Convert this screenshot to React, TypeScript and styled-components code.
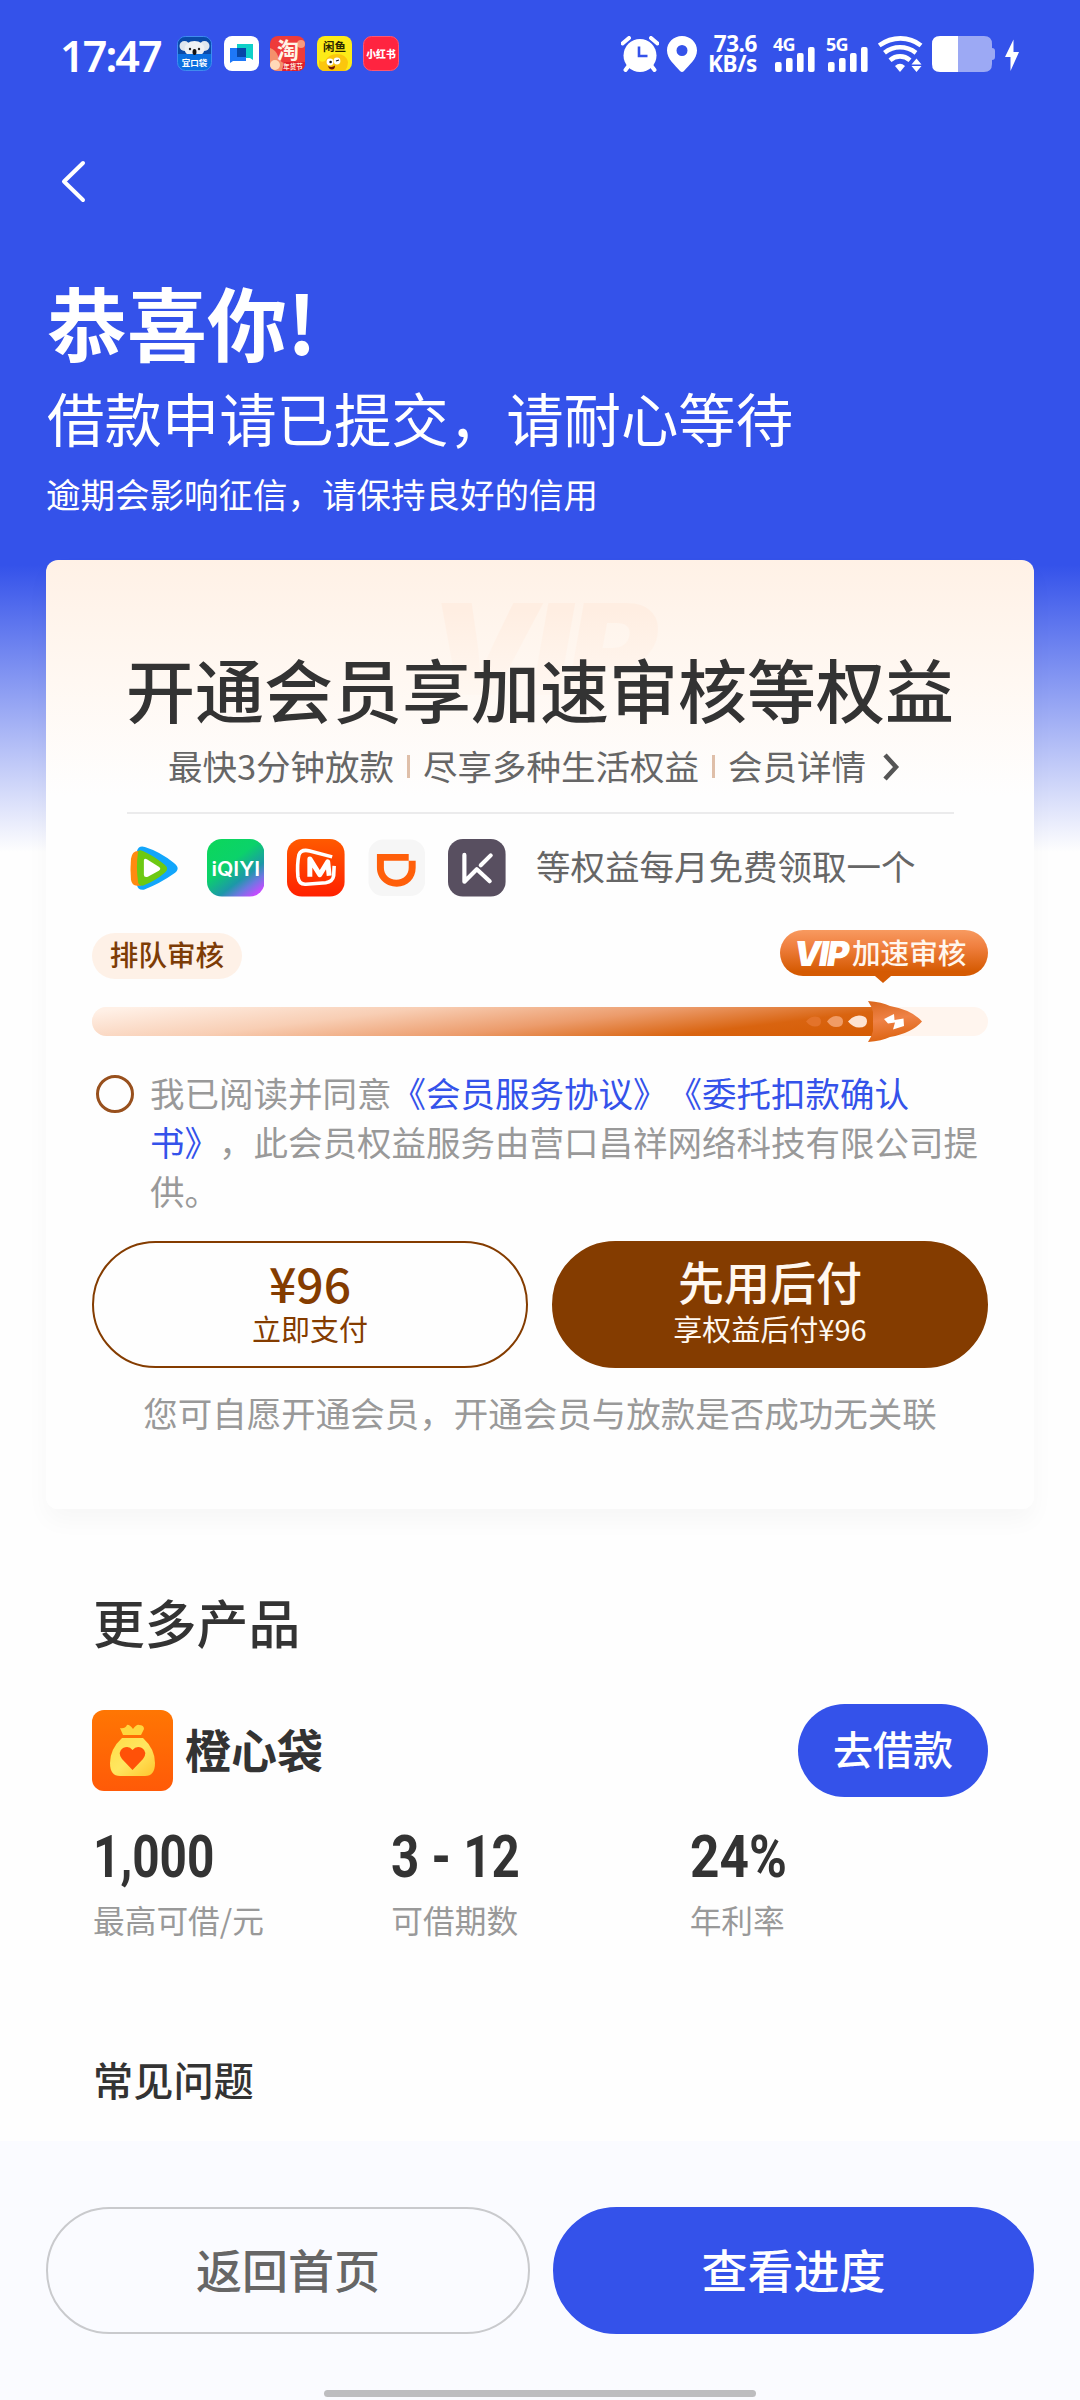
import React from "react";
import styled, { createGlobalStyle, css } from "styled-components";

const BLUE = "#3452ea";
const BROWN = "#843c00";

const Global = createGlobalStyle`
  * { box-sizing: border-box; }
  body {
    margin: 0;
    background: #fefefe;
    font-family: "Noto Sans CJK SC", sans-serif;
    text-spacing-trim: space-all;
  }
`;

const Page = styled.div`
  width: 1080px;
  height: 2400px;
  display: flex;
  flex-direction: column;
  overflow: hidden;
  background: linear-gradient(180deg, ${BLUE} 0, ${BLUE} 565px, #fefefe 852px);
`;

/* ---------- status bar ---------- */

const StatusBar = styled.header`
  height: 108px;
  padding: 36px 61px 0 60px;
  display: flex;
  align-items: flex-start;
  color: #fff;
`;

const Clock = styled.div`
  width: 117px;
  height: 36px;
  font: 600 43px/40px "Noto Sans", sans-serif;
  letter-spacing: -1.9px;
  white-space: nowrap;
`;

const Notifications = styled.div`
  display: flex;
  gap: 11.5px;
  margin-right: auto;
`;

const StatusIcons = styled.div`
  display: flex;
  align-items: flex-start;
`;

const Slot = styled.div<{ $w: number; $gap?: number }>`
  width: ${(p) => p.$w}px;
  margin-right: ${(p) => p.$gap ?? 0}px;
  flex: none;
  svg { display: block; }
`;

const Speed = styled.div`
  display: flex;
  flex-direction: column;
  align-items: flex-end;
  font: 700 22.5px/20px "Noto Sans", sans-serif;
  letter-spacing: -0.4px;
  white-space: nowrap;
  margin-top: -2px;
`;

const Network = styled.span`
  display: block;
  height: 14px;
  font: 700 18px/16px "Noto Sans", sans-serif;
  letter-spacing: -0.8px;
`;

const BarsDrawing = styled.svg`
  margin: -3px 0 0 2px;
`;

/* ---------- heading ---------- */

const NavBar = styled.nav`
  height: 164px;
  padding: 52px 0 0 61px;
`;

const Heading = styled.section`
  padding: 0 47px;
  color: #fff;
  white-space: nowrap;
`;

const Congrats = styled.h1`
  margin: 0;
  font-size: 80px;
  line-height: 97px;
  font-weight: 700;
`;

const Submitted = styled.p`
  margin: 12px 0 0;
  font-size: 57.4px;
  line-height: 72px;
`;

const Reminder = styled.p`
  margin: 18px 0 0 -1px;
  font-size: 34.5px;
  line-height: 44px;
`;

/* ---------- membership card ---------- */

const Card = styled.section`
  margin: 45px 46px 0;
  height: 949px;
  flex: none;
  padding: 88px 46px 0;
  border-radius: 12px;
  background: linear-gradient(180deg, #fff1e6 0, #fff8f2 120px, #fefefe 235px);
  box-shadow: 0 12px 24px rgba(0, 0, 0, 0.03);
  display: flex;
  flex-direction: column;
`;

const CardTitle = styled.h2`
  position: relative;
  margin: 0;
  text-align: center;
  font-size: 69px;
  line-height: 80px;
  font-weight: 500;
  color: #333;
  white-space: nowrap;
`;

const Watermark = styled.span`
  position: absolute;
  left: 336px;
  top: -62px;
  font: italic 900 126px/126px Inter, sans-serif;
  letter-spacing: -4px;
  padding-right: 20px;
  color: transparent;
  background: linear-gradient(180deg, #ffeee2 20%, #fff8f2 90%);
  background-clip: text;
  -webkit-background-clip: text;
  transform: scaleX(1.08);
  transform-origin: left;
`;

const TitleText = styled.span`
  position: relative;
`;

const Perks = styled.div`
  margin-top: 15px;
  height: 44px;
  padding-right: 12px;
  display: flex;
  justify-content: center;
  align-items: center;
  font-size: 34.5px;
  line-height: 44px;
  color: #666;
  white-space: nowrap;
`;

const PerkRule = styled.i`
  width: 3px;
  height: 23px;
  margin: 2px 13px 0;
  background: #dfbfa9;
`;

const Rule = styled.hr`
  width: 827px;
  height: 2px;
  margin: 25px auto 0;
  border: 0;
  background: #ebebec;
`;

const Benefits = styled.div`
  margin: 25px 0 0 34px;
  height: 58px;
  display: flex;
  align-items: center;
  gap: 23px;
  svg { display: block; flex: none; }
`;

const BenefitText = styled.span`
  margin: -6px 0 0 7px;
  font-size: 34.5px;
  line-height: 44px;
  color: #666;
  white-space: nowrap;
`;

const TagRow = styled.div`
  margin-top: 33px;
  display: flex;
  justify-content: space-between;
  align-items: flex-end;
  height: 49px;
`;

const pill = css`
  height: 46px;
  border-radius: 23px;
  font-size: 28.6px;
  font-weight: 500;
  line-height: 42px;
  white-space: nowrap;
`;

const QueueTag = styled.span`
  ${pill}
  width: 150px;
  text-align: center;
  color: #7d3c06;
  background: #fef1e7;
`;

const VipTag = styled.span`
  ${pill}
  position: relative;
  align-self: flex-start;
  width: 208px;
  padding-left: 14px;
  display: flex;
  line-height: 44px;
  color: #fff6ee;
  background: linear-gradient(180deg, #f89a60, #f08040 35%, #d55a02 90%);
  &::after {
    content: "";
    position: absolute;
    left: 95px;
    top: 46px;
    border: 8px solid transparent;
    border-top: 7px solid #d55a02;
    border-bottom: 0;
  }
`;

const VipMark = styled.b`
  width: 58px;
  color: #fff;
  font: italic 900 34px/47px Inter, sans-serif;
  letter-spacing: -2px;
`;

const Track = styled.div`
  margin-top: 28px;
  height: 29px;
  border-radius: 15px;
  background: #fff5ee;
`;

const TrackFill = styled.div`
  width: 785px;
  height: 29px;
  border-radius: 15px 0 0 15px;
  display: flex;
  align-items: center;
  justify-content: flex-end;
  background: linear-gradient(173deg, #fff0e6 4%, #f8ceb4 33%, #ec9c6c 58%, #d96410 80%, #d55a02);
  svg {
    display: block;
    flex: none;
    margin-right: -45px;
    overflow: visible;
  }
`;

const Terms = styled.div`
  margin-top: 32px;
  display: flex;
`;

const Radio = styled.span`
  flex: none;
  width: 38px;
  height: 38px;
  margin: 7px 16px 0 4px;
  border: 3px solid #98501d;
  border-radius: 50%;
`;

const TermsText = styled.p`
  margin: 0;
  width: 838px;
  font-size: 34.5px;
  line-height: 48.8px;
  color: #999;
`;

const Link = styled.a`
  color: ${BLUE};
`;

const PayRow = styled.div`
  margin-top: 26.5px;
  display: grid;
  grid-template-columns: 1fr 1fr;
  gap: 24px;
`;

const PayButton = styled.button<{ $solid?: boolean }>`
  height: 127px;
  padding: 0 0 2px;
  border-radius: 64px;
  border: 2px solid ${BROWN};
  background: ${(p) => (p.$solid ? BROWN : "transparent")};
  color: ${(p) => (p.$solid ? "#fff8f0" : BROWN)};
  font-family: inherit;
  display: flex;
  flex-direction: column;
  align-items: center;
  justify-content: center;
`;

const PayMain = styled.span<{ $size: number }>`
  font-size: ${(p) => p.$size}px;
  font-weight: 500;
  line-height: ${(p) => (p.$size > 46 ? 51 : 47)}px;
  height: 49px;
`;

const PaySub = styled.span`
  font-size: 29px;
  line-height: 44px;
`;

const Note = styled.p`
  margin: 22px 0 0;
  text-align: center;
  font-size: 34.5px;
  line-height: 44px;
  color: #999;
  white-space: nowrap;
`;

/* ---------- products ---------- */

const Products = styled.section`
  padding: 83px 92px 0;
  flex: 1;
  color: #333;
`;

const SectionTitle = styled.h2`
  margin: 0 0 0 1px;
  font-size: 51.8px;
  line-height: 60px;
  font-weight: 500;
`;

const ProductHead = styled.div`
  margin-top: 52px;
  height: 93px;
  display: flex;
  align-items: center;
  svg { display: block; }
`;

const ProductName = styled.span`
  margin: -6px auto 0 12px;
  font-size: 46px;
  line-height: 56px;
  font-weight: 700;
`;

const BorrowButton = styled.button`
  width: 190px;
  height: 93px;
  padding: 0 0 6px;
  border: 0;
  border-radius: 47px;
  background: ${BLUE};
  color: #fff;
  font: 500 40px/50px "Noto Sans CJK SC", sans-serif;
`;

const Stats = styled.dl`
  margin: 27px 0 0 1px;
  display: grid;
  grid-template-columns: repeat(3, 1fr);
`;

const Stat = styled.div`
  display: flex;
  flex-direction: column;
`;

const StatValue = styled.dd<{ $stretch: number }>`
  margin: 0;
  font: 700 59px/66px Roboto, sans-serif;
  white-space: pre;
  transform: scaleX(${(p) => p.$stretch});
  transform-origin: left;
`;

const StatLabel = styled.dt`
  margin-top: 9px;
  font-size: 31.7px;
  line-height: 40px;
  color: #999;
`;

const FaqTitle = styled.h3`
  margin: 115px 0 0 1px;
  font-size: 40.2px;
  line-height: 50px;
  font-weight: 500;
`;

/* ---------- footer ---------- */

const Footer = styled.footer`
  height: 259px;
  flex: none;
  padding: 66px 46px 0;
  background: #fafbff;
  display: flex;
  flex-direction: column;
  align-items: center;
`;

const FooterButtons = styled.div`
  width: 988px;
  display: grid;
  grid-template-columns: 484px 481px;
  justify-content: space-between;
`;

const FooterButton = styled.button<{ $solid?: boolean }>`
  height: 127px;
  padding: 0 0 5px;
  border-radius: 64px;
  border: 2px solid ${(p) => (p.$solid ? BLUE : "#c9cacd")};
  background: ${(p) => (p.$solid ? BLUE : "transparent")};
  color: ${(p) => (p.$solid ? "#fff" : "#666")};
  font: 500 46px/60px "Noto Sans CJK SC", sans-serif;
`;

const HomeBar = styled.div`
  width: 432px;
  height: 7px;
  margin-top: 56px;
  border-radius: 4px;
  background: #bdbdbf;
`;

/* ---------- drawings ---------- */

const cjk = { fontFamily: '"Noto Sans CJK SC", sans-serif' };

const PocketApp = () => (
  <svg width="35" height="35" viewBox="0 0 35 35">
    <rect x=".5" y=".5" width="34" height="34" rx="8" fill="#0b6fe0" stroke="#3f8cf0" />
    <path d="M1 18V9Q1 1 9 1h17q8 0 8 8v9z" fill="#0a4aa8" />
    <circle cx="7.500" cy="10" r="5" fill="#dfe6ee" />
    <circle cx="27.500" cy="10" r="5" fill="#dfe6ee" />
    <ellipse cx="17.500" cy="13" rx="10" ry="8" fill="#eef1f4" />
    <path d="M2 18h31v3H2z" fill="#0b6fe0" />
    <circle cx="13" cy="13" r="1.200" fill="#222" />
    <circle cx="22" cy="13" r="1.200" fill="#222" />
    <ellipse cx="17.500" cy="16" rx="2" ry="3" fill="#111" />
    <text x="17.500" y="30" fontSize="8.500" fontWeight="700" fill="#fff" textAnchor="middle" style={cjk}>宜口袋</text>
  </svg>
);

const ChatApp = () => (
  <svg width="35" height="35" viewBox="0 0 35 35">
    <rect width="35" height="35" rx="8" fill="#fff" />
    <path d="M13 8h16v16l-3-2H13z" fill="#0fd0c8" />
    <path d="M6 12h16v13H9l-3 2z" fill="#1e78f8" />
    <path d="M13 12h9v9h-9z" fill="#0647a8" />
  </svg>
);

const TaobaoApp = () => (
  <svg width="35" height="35" viewBox="0 0 35 35">
    <rect width="35" height="35" rx="8" fill="#ee3b3a" />
    <path d="M0 12q6 2 8 8t6 7v8H8q-8 0-8-8z" fill="#f4906c" />
    <circle cx="5" cy="29" r="5" fill="#ffd9b8" />
    <circle cx="31" cy="8" r="4" fill="#f79a80" />
    <text x="18" y="22" fontSize="22" fontWeight="700" fill="#fff4e6" textAnchor="middle" style={cjk}>淘</text>
    <path d="M14 26h21v1q0 8-8 8H12z" fill="#e01f2b" />
    <text x="23" y="33" fontSize="6.500" fontWeight="700" fill="#ffe9dc" textAnchor="middle" style={cjk}>年货节</text>
  </svg>
);

const XianyuApp = () => (
  <svg width="35" height="35" viewBox="0 0 35 35">
    <rect width="35" height="35" rx="8" fill="#fdeb18" />
    <path d="M2 24q2 3 6 1 4-7 12-7 9 0 11 8 0 5-3 9H8q-5 0-6-5z" fill="#fbc60d" />
    <text x="17.500" y="15" fontSize="11.500" fontWeight="700" fill="#2b2600" textAnchor="middle" style={cjk}>闲鱼</text>
    <circle cx="13" cy="26" r="3.400" fill="#fff" />
    <circle cx="20" cy="25" r="3.400" fill="#fff" />
    <circle cx="13.600" cy="26" r="1.300" fill="#111" />
    <path d="M19 25l3-1" stroke="#111" strokeWidth="1.300" />
    <path d="M11 30q4 2 7-.500 0 4-3 4t-4-3.500z" fill="#6d1606" />
  </svg>
);

const RedApp = () => (
  <svg width="36" height="35" viewBox="0 0 36 35">
    <rect x=".5" y=".5" width="35" height="34" rx="8" fill="#ff2440" stroke="#ff5570" />
    <text x="18" y="22" fontSize="9.800" fontWeight="900" fill="#fff" textAnchor="middle" style={cjk}>小红书</text>
  </svg>
);

const Alarm = () => (
  <svg width="38" height="36" viewBox="0 0 38 36" fill="none" stroke="#fff">
    <circle cx="19" cy="19.500" r="16.500" fill="#fff" stroke="none" />
    <path d="M1.500 7.500L8 2M36.500 7.500L30 2" strokeWidth="4" strokeLinecap="round" />
    <path d="M7.500 30L4.500 34M30.500 30l3 4" strokeWidth="4" strokeLinecap="round" />
    <path d="M18 10.500V20h8.500" stroke={BLUE} strokeWidth="2.600" />
  </svg>
);

const Pin = () => (
  <svg width="30" height="36" viewBox="0 0 30 36">
    <path fillRule="evenodd" fill="#fff" d="M15 0C6.500 0 0 6.500 0 14.500 0 23 8 29 13 35q2 2 4 0c5-6 13-12 13-20.500C30 6.500 23.500 0 15 0zm0 9a5.500 5.500 0 1 1 0 11 5.500 5.500 0 0 1 0-11z" />
  </svg>
);

const Bars = () => (
  <BarsDrawing width="40" height="25" viewBox="0 0 40 25" fill="#fff">
    <rect x="0" y="15" width="6.600" height="10" rx="2" />
    <rect x="11" y="11" width="6.600" height="14" rx="2" />
    <rect x="22" y="6" width="6.600" height="19" rx="2" />
    <rect x="33" y="0" width="6.600" height="25" rx="2" />
  </BarsDrawing>
);

const Wifi = () => (
  <svg width="45" height="36" viewBox="0 0 45 36" fill="none" stroke="#fff" strokeWidth="4.600">
    <path d="M1.200 9.500Q11 2.400 22.500 2.400T43 9.500" />
    <path d="M6.500 16.800Q13.500 11.300 22 11.300t16 5.500" />
    <path d="M12 24.200q4.500-3.800 10-3.800t10 3.800" />
    <path d="M17 30q5-4.500 10 0l-5 6z" fill="#fff" stroke="none" />
    <path d="M38.500 22.500l5 6h-10zM38.500 36l-5-6h10z" fill="#fff" stroke="none" />
  </svg>
);

const Battery = () => (
  <svg width="63" height="36" viewBox="0 0 63 36">
    <path d="M26 0h26q8 0 8 8v4q3 0 3 3v6q0 3-3 3v4q0 8-8 8H26z" fill="#9ca9f4" />
    <path d="M8 0h18v36H8q-8 0-8-8V8q0-8 8-8z" fill="#fff" />
  </svg>
);

const Bolt = () => (
  <svg width="14" height="36" viewBox="0 0 14 36">
    <path d="M8.500 3.500L0 21h5.500v14L14 16H8.500z" fill="#fff" />
  </svg>
);

const Back = () => (
  <svg width="25" height="43" viewBox="0 0 25 43" fill="none" stroke="#fff" strokeWidth="4" strokeLinecap="round" strokeLinejoin="round">
    <path d="M22 3L3 21.500 22 40" />
  </svg>
);

const More = styled.svg`
  margin: 3px 0 0 16px;
`;

const Tencent = () => (
  <svg width="57.600" height="57.600" viewBox="0 0 58 58">
    <path d="M11 12Q13 6 19 8q16 5 29 16 8 6 0 11-14 10-30 16-6 1-7-5z" fill="#12a6fb" />
    <path d="M5 20q1-8 7-8h3v35H11q-5 0-6-6-1-10 0-21z" fill="#ff8a10" />
    <path d="M12 14q0-4 5-2 13 6 22 14 5 4 0 8-9 8-22 13-5 0-5-5-2-14 0-28z" fill="#6dc912" />
    <path d="M18 22q0-3 3-1.500L33 28q3 2 0 4l-11 6q-4 1-4-2z" fill="#fff" />
  </svg>
);

const Iqiyi = () => (
  <svg width="57.600" height="57.600" viewBox="0 0 58 58">
    <defs>
      <linearGradient id="iq" x1=".15" y1="0" x2=".9" y2="1">
        <stop offset="0" stopColor="#0cd65c" />
        <stop offset=".38" stopColor="#0bd26a" />
        <stop offset=".66" stopColor="#1c98a8" />
        <stop offset=".8" stopColor="#6c78e0" />
        <stop offset=".95" stopColor="#c44cff" />
      </linearGradient>
    </defs>
    <rect width="58" height="58" rx="15" fill="url(#iq)" />
    <text x="29" y="37" fontSize="20" fontWeight="600" fill="#fff" textAnchor="middle" textLength="49" lengthAdjust="spacingAndGlyphs" fontFamily="Inter, sans-serif">iQIYI</text>
  </svg>
);

const Mango = () => (
  <svg width="57.600" height="57.600" viewBox="0 0 58 58">
    <defs>
      <linearGradient id="mg" x1="0" y1="0" x2="0" y2="1">
        <stop offset="0" stopColor="#ff5a00" />
        <stop offset="1" stopColor="#ff2000" />
      </linearGradient>
    </defs>
    <rect width="58" height="58" rx="15" fill="url(#mg)" />
    <g fill="none" stroke="#fff" strokeLinejoin="round">
      <path d="M45.500 18L23 12q-9-2-11 4-2 9-1 22 1 8 8 7.500l20-1.500q7-1 8-7l.500-10" strokeWidth="3.600" />
      <path d="M23 38V20l10 16 8-13 1.500 14" strokeWidth="5" />
    </g>
  </svg>
);

const Didi = () => (
  <svg width="57.600" height="57.600" viewBox="0 0 58 58">
    <rect x=".5" y=".5" width="57" height="57" rx="15" fill="#f6f6f6" />
    <path fillRule="evenodd" fill="#ff5f0a" d="M9 15h32v7h7v7c0 11-8 19-19 19S9 40 9 29zm7 7v7c0 7 5 12 12.500 12S41 36 41 29v-7z" />
  </svg>
);

const Keep = () => (
  <svg width="57.600" height="57.600" viewBox="0 0 58 58">
    <rect width="58" height="58" rx="15" fill="#584f60" />
    <path d="M16.500 16v27L29 30.500 42 42.500M33 26.500L43 16.500" fill="none" stroke="#fff" strokeWidth="4.200" strokeLinecap="round" strokeLinejoin="round" />
  </svg>
);

const Rocket = () => (
  <svg width="117" height="41" viewBox="0 0 117 41">
    <defs>
      <linearGradient id="rk" x1="0" y1="0" x2=".2" y2="1">
        <stop offset="0" stopColor="#d9671d" />
        <stop offset=".5" stopColor="#ef8246" />
        <stop offset="1" stopColor="#dd6412" />
      </linearGradient>
    </defs>
    <path d="M1 20.500q4-5 9-5 6 0 6 5t-6 5q-5 0-9-5z" fill="#e3732a" />
    <path d="M22 20.500q4-5.500 9-5.500 7 0 7 5.500T31 26q-5 0-9-5.500z" fill="#f09c66" />
    <path d="M43 20.500q5-6 11-6 8 0 8 6t-8 6q-6 0-11-6z" fill="#fde3d2" />
    <path d="M63 0q14 1 22 5 22 4 32 15.500Q107 32 85 36q-8 4-22 5 4-6 5-11V11q-1-5-5-11z" fill="url(#rk)" />
    <path d="M79 18l10-5 .500 6 9-1.500.500 7.500-11 3.500 2-7-7 1z" fill="#fff" />
  </svg>
);

const MoneyBag = () => (
  <svg width="81" height="81" viewBox="0 0 81 81">
    <defs>
      <linearGradient id="bg" x1="0" y1="0" x2="0" y2="1">
        <stop offset="0" stopColor="#ff7603" />
        <stop offset="1" stopColor="#ff5a08" />
      </linearGradient>
      <linearGradient id="bag" x1="0" y1="0" x2="1" y2="1">
        <stop offset="0" stopColor="#ffdc48" />
        <stop offset=".5" stopColor="#ffe760" />
        <stop offset="1" stopColor="#ffc52e" />
      </linearGradient>
    </defs>
    <rect width="81" height="81" rx="12" fill="url(#bg)" />
    <path d="M28 18q5 1 7-3 2-1 6 4 4-5 6-4 5 0 5 4l-3 6H31z" fill="#ffd63e" />
    <path d="M30 28h21q12 11 12 25 0 13-10 13H28q-10 0-10-13 0-14 12-25z" fill="url(#bag)" />
    <path d="M40.500 60L30 49q-5-7 1-11 6-3 9.500 2 4-5 9.500-2 6 4 1 11z" fill="#ff5108" />
  </svg>
);

export default function App() {
  return (
    <>
      <Global />
      <Page>
        <StatusBar>
          <Clock>17:47</Clock>
          <Notifications>
            <PocketApp />
            <ChatApp />
            <TaobaoApp />
            <XianyuApp />
            <RedApp />
          </Notifications>
          <StatusIcons>
            <Slot $w={38} $gap={8}><Alarm /></Slot>
            <Slot $w={30} $gap={10}><Pin /></Slot>
            <Slot $w={50} $gap={16}>
              <Speed><span>73.6</span><span>KB/s</span></Speed>
            </Slot>
            <Slot $w={42} $gap={11}><Network>4G</Network><Bars /></Slot>
            <Slot $w={42} $gap={10}><Network>5G</Network><Bars /></Slot>
            <Slot $w={45} $gap={9}><Wifi /></Slot>
            <Slot $w={63} $gap={10}><Battery /></Slot>
            <Slot $w={14}><Bolt /></Slot>
          </StatusIcons>
        </StatusBar>
        <NavBar><Back /></NavBar>
        <Heading>
          <Congrats>恭喜你!</Congrats>
          <Submitted>借款申请已提交，请耐心等待</Submitted>
          <Reminder>逾期会影响征信，请保持良好的信用</Reminder>
        </Heading>

        <Card>
          <CardTitle>
            <Watermark>VIP</Watermark>
            <TitleText>开通会员享加速审核等权益</TitleText>
          </CardTitle>
          <Perks>
            最快3分钟放款<PerkRule />尽享多种生活权益<PerkRule />会员详情
            <More width="18" height="28" viewBox="0 0 18 28" fill="none" stroke="#555" strokeWidth="4.500">
              <path d="M3 2l11 12L3 26" />
            </More>
          </Perks>
          <Rule />
          <Benefits>
            <Tencent />
            <Iqiyi />
            <Mango />
            <Didi />
            <Keep />
            <BenefitText>等权益每月免费领取一个</BenefitText>
          </Benefits>
          <TagRow>
            <QueueTag>排队审核</QueueTag>
            <VipTag><VipMark>VIP</VipMark>加速审核</VipTag>
          </TagRow>
          <Track>
            <TrackFill><Rocket /></TrackFill>
          </Track>
          <Terms>
            <Radio />
            <TermsText>
              我已阅读并同意<Link>《会员服务协议》《委托扣款确认书》</Link>，此会员权益服务由营口昌祥网络科技有限公司提供。
            </TermsText>
          </Terms>
          <PayRow>
            <PayButton><PayMain $size={48}>¥96</PayMain><PaySub>立即支付</PaySub></PayButton>
            <PayButton $solid><PayMain $size={46}>先用后付</PayMain><PaySub>享权益后付¥96</PaySub></PayButton>
          </PayRow>
          <Note>您可自愿开通会员，开通会员与放款是否成功无关联</Note>
        </Card>

        <Products>
          <SectionTitle>更多产品</SectionTitle>
          <ProductHead>
            <MoneyBag />
            <ProductName>橙心袋</ProductName>
            <BorrowButton>去借款</BorrowButton>
          </ProductHead>
          <Stats>
            <Stat><StatValue $stretch={0.81}>1,000</StatValue><StatLabel>最高可借/元</StatLabel></Stat>
            <Stat><StatValue $stretch={0.835}>3 - 12</StatValue><StatLabel>可借期数</StatLabel></Stat>
            <Stat><StatValue $stretch={0.87}>24%</StatValue><StatLabel>年利率</StatLabel></Stat>
          </Stats>
          <FaqTitle>常见问题</FaqTitle>
        </Products>

        <Footer>
          <FooterButtons>
            <FooterButton>返回首页</FooterButton>
            <FooterButton $solid>查看进度</FooterButton>
          </FooterButtons>
          <HomeBar />
        </Footer>
      </Page>
    </>
  );
}
